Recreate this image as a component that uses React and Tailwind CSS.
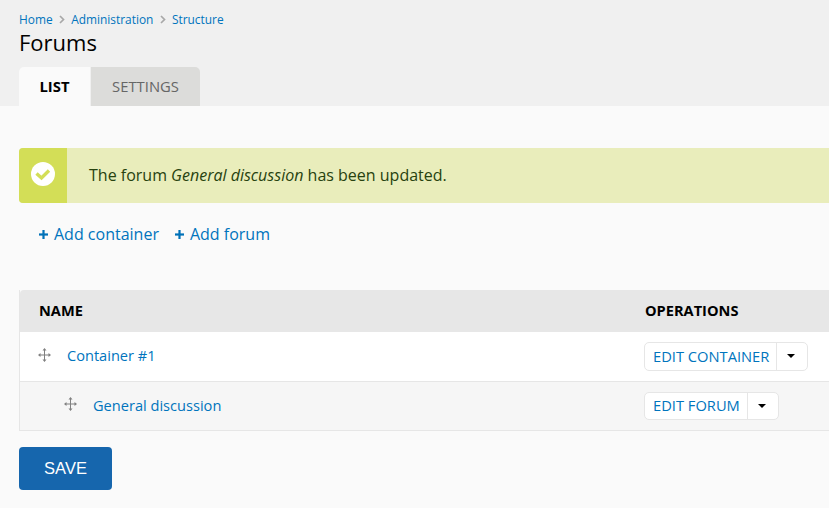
import React from 'react';

const linkColor = 'text-[#0074bd]';

const Chevron = () => (
  <svg className="w-[6px] h-[9px] mx-[6.3px]" viewBox="0 0 6 9" fill="none">
    <path d="M1 1 L4.5 4.5 L1 8" stroke="#a8a8a8" strokeWidth="1.7" />
  </svg>
);

const DragHandle = () => (
  <svg className="w-[13px] h-[14px]" viewBox="0 0 13 14" fill="#808080">
    <rect x="1" y="6.5" width="11" height="1" />
    <rect x="6" y="1" width="1" height="12" />
    <path d="M6.5 0 L8.5 2.5 H4.5 Z M6.5 14 L4.5 11.5 H8.5 Z M0 7 L2.5 5 V9 Z M13 7 L10.5 9 V5 Z" />
  </svg>
);

const Plus = () => (
  <svg className="w-[9px] h-[9px] mr-[6px]" viewBox="0 0 9 9" fill="#0071b8">
    <rect x="0" y="3.4" width="9" height="2.2" />
    <rect x="3.4" y="0" width="2.2" height="9" />
  </svg>
);

const SplitButton = ({ label, height }) => (
  <div className={`ml-[-1px] inline-flex items-stretch rounded-[5px] border border-[#e6e6e6] bg-white ${height}`}>
    <span className={`flex items-center pb-[1px] pl-[8px] pr-[7px] text-[14.7px] ${linkColor}`}>{label}</span>
    <span className="flex w-[31px] items-center justify-center border-l border-[#e6e6e6] pr-[2px]">
      <span className="mt-[-1px] h-0 w-0 border-x-[4px] border-t-[4px] border-x-transparent border-t-black" />
    </span>
  </div>
);

const Row = ({ indent, label, button, className, textOffset }) => (
  <div className={`flex items-stretch border-b border-[#e6e6e6] ${className}`}>
    <div className="flex w-[625px] items-center" style={{ paddingLeft: indent }}>
      <span className="mb-[4px] ml-[-1px] mr-[16px]"><DragHandle /></span>
      <a className={`text-[14.6px] ${linkColor} ${textOffset}`}>{label}</a>
    </div>
    <div className="flex items-center">{button}</div>
  </div>
);

export default function App() {
  return (
    <div className="h-[508px] w-[829px] overflow-hidden bg-[#fafafa] font-['Open_Sans',sans-serif] text-[#222]">
      <div className="h-[106px] bg-[#f0f0f0] pl-[19px]">
        <div className={`flex h-[39px] items-center text-[11.9px] ${linkColor}`}>
          <a>Home</a>
          <Chevron />
          <a>Administration</a>
          <Chevron />
          <a>Structure</a>
        </div>
        <h1 className="mt-[-12px] text-[22px] leading-[30px] text-black">Forums</h1>
        <div className="mt-[10px] flex h-[39px]">
          <div className="flex w-[71px] items-center justify-center rounded-tl-[5px] bg-[#fafafa] pb-[1px] text-[14.8px] font-bold text-black">LIST</div>
          <div className="ml-[1px] flex w-[109px] items-center justify-center rounded-tr-[5px] bg-[#dcdcda] text-[14.8px] text-[#666]">SETTINGS</div>
        </div>
      </div>

      <div className="w-[900px] pl-[19px] pt-[42px]">
        <div className="flex h-[55px] w-[881px] items-stretch overflow-hidden rounded-l-[4px] bg-[#e9edbb]">
          <div className="flex w-[48px] items-center justify-center bg-[#d3de57] pb-[4px]">
            <svg className="h-[24px] w-[24px]" viewBox="0 0 24 24">
              <circle cx="12" cy="12" r="12" fill="#fff" />
              <path d="M5.5 11.5 L10.5 16 L18 8.5" fill="none" stroke="#d3de57" strokeWidth="3.4" />
            </svg>
          </div>
          <p className="flex items-center whitespace-pre pb-[2px] pl-[22px] text-[16px] text-[#27420f]">
            The forum <em>General discussion</em> has been updated.
          </p>
        </div>

        <div className={`flex h-[62px] items-center pl-[20px] text-[16px] ${linkColor}`}>
          <a className="flex items-center"><Plus />Add container</a>
          <a className="ml-[16px] flex items-center"><Plus />Add forum</a>
        </div>

        <div className="mt-[25px] w-[881px] border-l border-[#e6e6e6]">
          <div className="flex h-[42px] items-center rounded-tl-[4px] bg-[#e7e7e7] text-[14.6px] font-bold text-black">
            <div className="w-[625px] pl-[19px]">NAME</div>
            <div>OPERATIONS</div>
          </div>
          <Row className="h-[50px] bg-white" indent={19} label="Container #1" textOffset="mb-[2px]" button={<SplitButton label="EDIT CONTAINER" height="h-[29px]" />} />
          <Row className="h-[49px] bg-[#f6f6f6]" indent={45} label="General discussion" button={<SplitButton label="EDIT FORUM" height="h-[28px]" />} />
        </div>

        <button className="mt-[16px] flex h-[43px] w-[93px] items-center justify-center rounded-[4px] bg-[#1666ad] font-['Liberation_Sans',sans-serif] text-[16.5px] text-white">SAVE</button>
      </div>
    </div>
  );
}
